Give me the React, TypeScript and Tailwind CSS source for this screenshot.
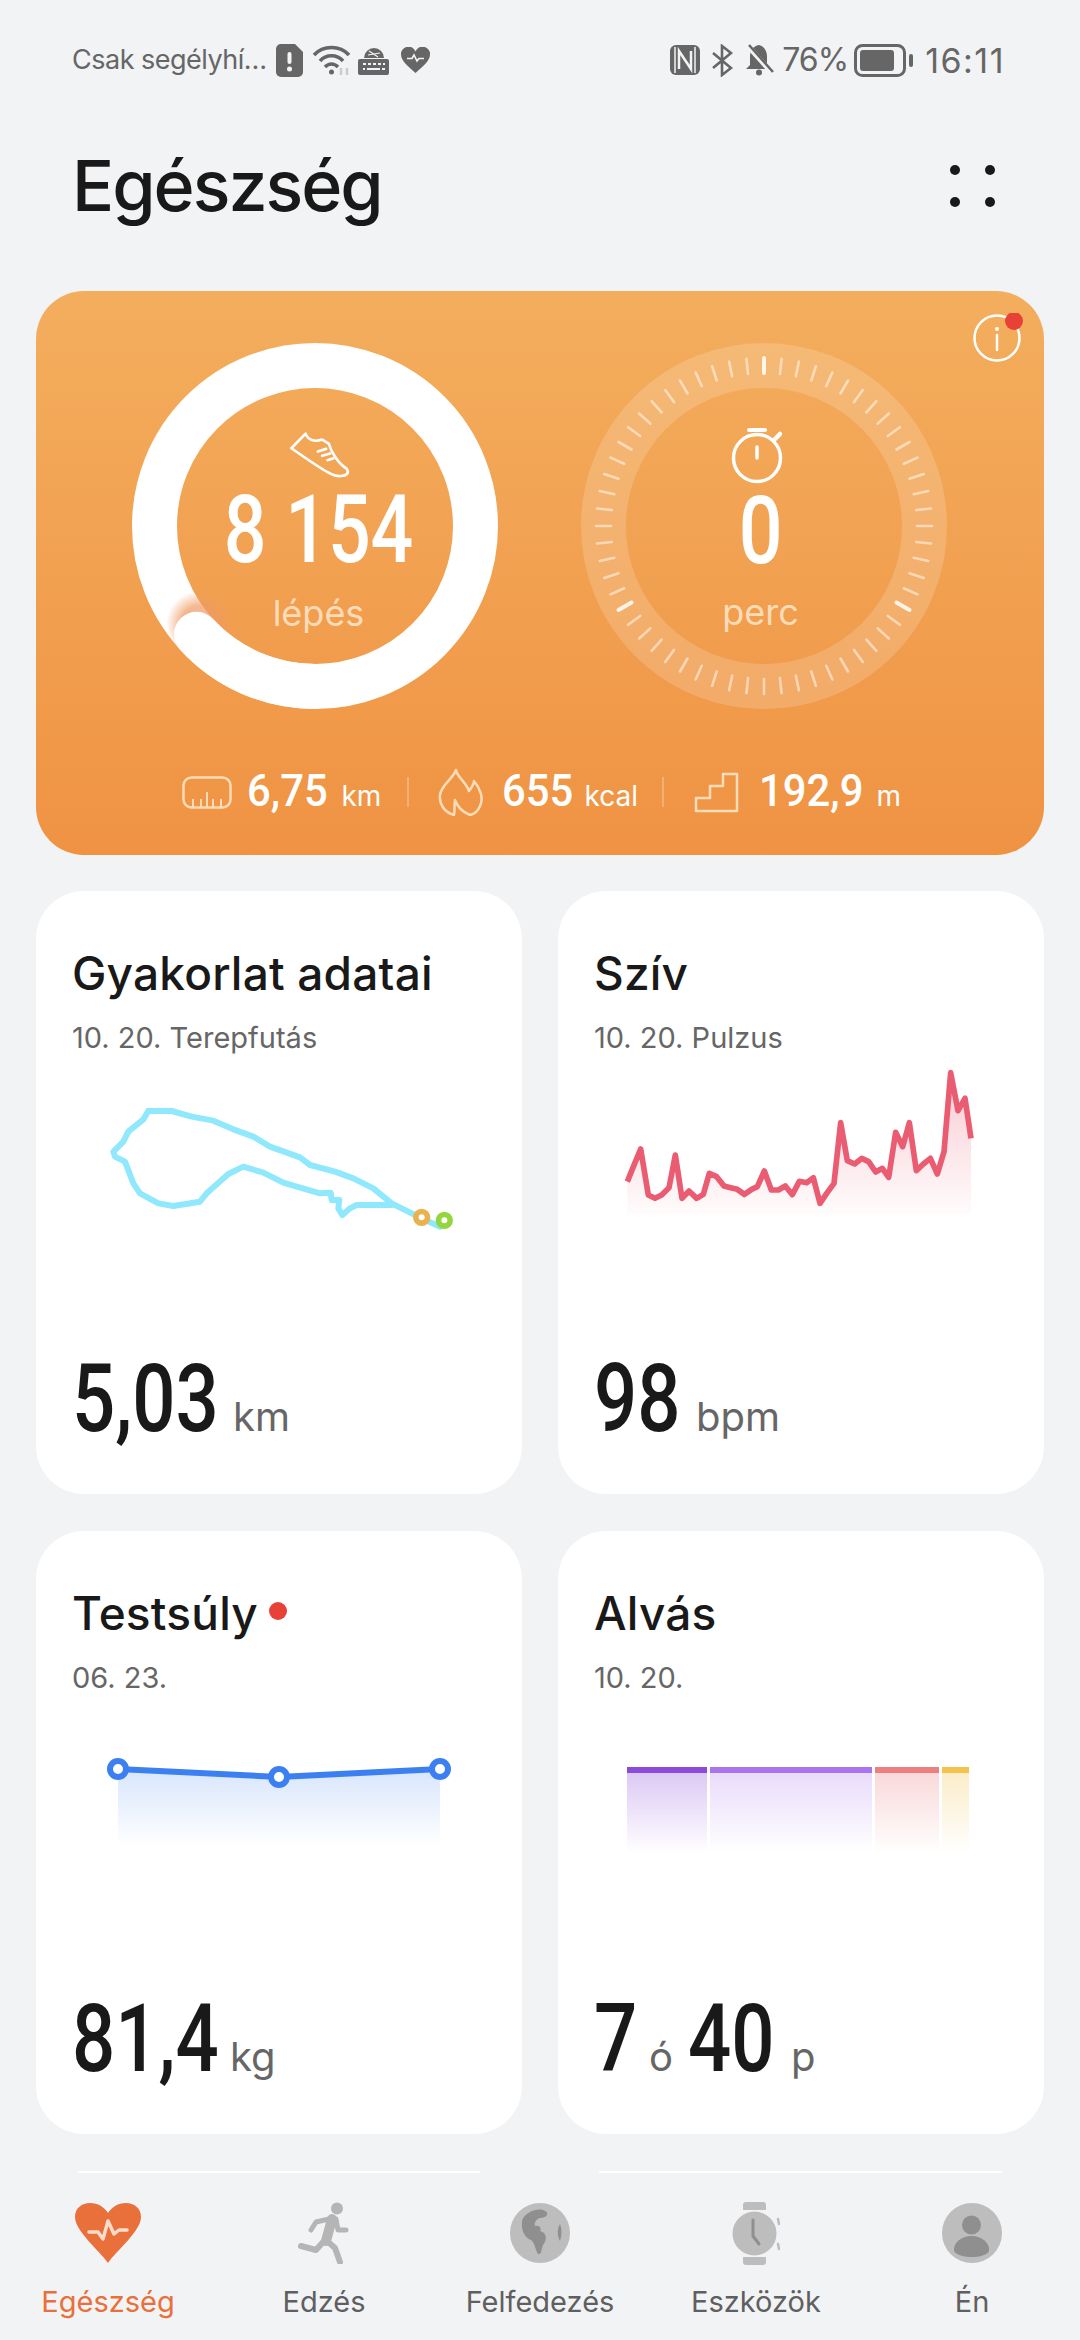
const DIGITS = "font-['Roboto',sans-serif] font-medium whitespace-nowrap";
const SANS = "font-['Inter','Noto_Sans',sans-serif]";

const routeA =
  "175,93 245,93 305,110 370,122 430,148 490,170 540,200 630,232 660,255 735,275 790,295 850,325 905,370 985,410 1050,440";
const routeB =
  "905,375 800,375 780,385 757,405 745,385 748,360 725,360 722,338 690,340 620,320 580,308 520,278 460,260 415,282 350,340 330,365 250,378 205,370 150,340 130,310 105,245 75,230 70,215 100,185 115,155 160,118 175,93";
const pulse =
  "52,395 68,355 92,297 115,435 135,445 155,435 177,413 196,315 216,445 237,423 260,445 280,433 298,370 320,380 342,408 362,413 382,418 403,433 425,418 442,410 463,363 484,420 505,420 526,408 547,434 568,394 590,398 610,383 630,460 650,430 672,400 692,218 712,332 734,342 755,325 776,335 797,366 817,355 836,382 857,247 878,290 898,218 919,362 940,342 961,325 982,372 1002,305 1022,68 1044,182 1065,145 1083,265";

const sleepBars = [
  { w: "w-[80px]", top: "bg-[#8d4bdc]", fill: "from-[#8d4bdc]/30" },
  { w: "w-[162px]", top: "bg-[#a974ee]", fill: "from-[#a974ee]/25" },
  { w: "w-[64px]", top: "bg-[#ec8080]", fill: "from-[#ec8080]/30" },
  { w: "w-[27px]", top: "bg-[#f3c34e]", fill: "from-[#f3c34e]/30" },
];

function StatusBar() {
  return (
    <div className={`h-[120px] flex items-center pl-[72px] pr-[75px] text-[#666666] ${SANS}`}>
      <span className="text-[27px] tracking-[-0.5px] w-[204px] whitespace-nowrap">Csak segélyhí…</span>
      <svg width="27" height="33" viewBox="0 0 27 33">
        <path d="M5 0H19L27 8V28a5 5 0 0 1-5 5H5a5 5 0 0 1-5-5V5a5 5 0 0 1 5-5Z" fill="#666666" />
        <rect x="11.5" y="8" width="4" height="12" rx="2" fill="#f2f3f5" />
        <circle cx="13.5" cy="25" r="2.5" fill="#f2f3f5" />
      </svg>
      <svg className="ml-[9px]" width="39" height="32" viewBox="0 0 39 32" fill="none" stroke="#666666" strokeWidth="3.5">
        <path d="M2 11C11 1 28 1 37 11" />
        <path d="M8 17C14 10 25 10 31 17" />
        <path d="M13 23C17 19 22 19 26 23" />
        <circle cx="19.5" cy="28" r="2.5" fill="#666666" stroke="none" />
        <path d="M29 24V31M35 24V31" stroke="#cccccc" strokeWidth="2.5" />
      </svg>
      <svg className="ml-[7px]" width="31" height="30" viewBox="0 0 31 30">
        <path d="M6 13a10 10 0 1 1 20 0Z" fill="#666666" />
        <path d="M11 6 20 12M10 10 22 8" stroke="#f2f3f5" strokeWidth="1.2" />
        <rect x="0" y="14" width="31" height="16" rx="2" fill="#666666" />
        <path d="M5 19h3M10 19h3M15 19h3M20 19h3M25 19h2M5 24h2M9 24h13M24 24h3" stroke="#f2f3f5" strokeWidth="2" />
      </svg>
      <svg className="ml-[12px]" width="29" height="26" viewBox="0 0 29 26">
        <path d="M14.5 26C8 20 0 14 0 7.500A7.500 7.500 0 0 1 14.500 4.500A7.500 7.500 0 0 1 29 7.500C29 14 21 20 14.500 26Z" fill="#666666" />
        <path d="M6 11.500H11L13 8L16 14L18 11.500H23" fill="none" stroke="#f2f3f5" strokeWidth="1.6" />
      </svg>
      <div className="flex-1" />
      <svg width="30" height="30" viewBox="0 0 30 30">
        <rect width="30" height="30" rx="6" fill="#666666" />
        <path d="M5 2V28M25 2V28" stroke="#f2f3f5" strokeWidth="1.5" />
        <path d="M9 24V6L21 24V6" fill="none" stroke="#f2f3f5" strokeWidth="2.5" />
      </svg>
      <svg className="ml-[11px]" width="22" height="33" viewBox="0 0 22 33" fill="none" stroke="#666666" strokeWidth="2.6">
        <path d="M2 9 20 24 11 31V2L20 9 2 24" />
      </svg>
      <svg className="ml-[11px]" width="31" height="32" viewBox="0 0 31 32">
        <path d="M15 1c-6 1-9 6-9 11v9l-4 4h25l-4-4v-9c0-5-3-10-8-11Z" fill="#666666" />
        <circle cx="15" cy="28.500" r="3" fill="#666666" />
        <path d="M3 1 29 30" stroke="#f2f3f5" strokeWidth="5" />
        <path d="M5 1 29 28" stroke="#666666" strokeWidth="2.500" />
      </svg>
      <span className="ml-[7px] text-[32px] tracking-[-1px]">76%</span>
      <svg className="ml-[6px]" width="59" height="33" viewBox="0 0 59 33">
        <rect x="1.500" y="1.500" width="49" height="30" rx="7" fill="none" stroke="#666666" strokeWidth="3" />
        <rect x="6" y="6" width="34" height="21" rx="3" fill="#666666" />
        <rect x="55" y="10" width="4" height="13" rx="2" fill="#666666" />
      </svg>
      <span className="ml-[12px] text-[34px] tracking-[1.5px]">16:11</span>
    </div>
  );
}

function StepsRing() {
  return (
    <svg className="absolute inset-0" width="366" height="366" viewBox="-183 -183 366 366" fill="none">
      <defs>
        <radialGradient id="capGlow">
          <stop offset="55%" stopColor="#ee9a63" stopOpacity="0.7" />
          <stop offset="100%" stopColor="#ee9a63" stopOpacity="0" />
        </radialGradient>
      </defs>
      <circle r="160.500" stroke="#ffffff" strokeWidth="45" />
      <circle cx="-116" cy="98" r="33" fill="url(#capGlow)" />
      <path d="M0 160.500A160.500 160.500 0 0 1 -118.500 108.300" stroke="#ffffff" strokeWidth="45" strokeLinecap="round" />
    </svg>
  );
}

function TimerRing() {
  return (
    <svg className="absolute inset-0" width="366" height="366" viewBox="-183 -183 366 366" fill="none">
      <circle r="160.500" stroke="#ffffff" strokeOpacity="0.17" strokeWidth="45" />
      {Array.from({ length: 60 }, (_, i) => (
        <line
          key={i}
          y1="-153"
          y2="-168"
          stroke="#ffffff"
          strokeOpacity={i % 20 === 0 ? 0.85 : 0.5}
          strokeWidth={i % 20 === 0 ? 4 : 2.600}
          strokeLinecap="round"
          transform={`rotate(${i * 6})`}
        />
      ))}
    </svg>
  );
}

function Hero() {
  return (
    <div className="relative mx-[36px] mt-[55px] h-[564px] rounded-[48px] bg-linear-to-b from-[#f3ae5d] to-[#ef9343] pt-[52px]">
      <svg className="absolute left-[936px] top-[22px]" width="52" height="52" viewBox="0 0 52 52" fill="none">
        <circle cx="25" cy="25" r="22.500" stroke="#ffffff" strokeWidth="2.500" />
        <circle cx="25" cy="16" r="2" fill="#ffffff" />
        <path d="M25 22V37" stroke="#ffffff" strokeWidth="2.500" strokeLinecap="round" />
        <circle cx="42" cy="8" r="9" fill="#e84238" />
      </svg>
      <div className="flex pl-[96px] gap-[83px]">
        <div className="relative w-[366px] h-[366px] flex flex-col items-center text-white">
          <StepsRing />
          <svg className="relative mt-[88px] ml-[8px]" width="63" height="49" viewBox="565 358 190 148" fill="none" stroke="#ffffff" strokeWidth="8" strokeLinejoin="round" strokeLinecap="round">
            <path d="M618 366C625 385 645 392 668 384L688 396C695 420 715 455 742 472C750 482 745 492 725 494C705 497 690 490 575 410Z" />
            <path d="M655 420 680 412M668 433 692 426M684 446 702 440" />
          </svg>
          <span className={`relative ml-[8px] mt-[5px] text-[94px] leading-[90px] scale-x-[0.8] ${DIGITS}`}>8 154</span>
          <span className={`relative ml-[7px] mt-[15px] text-[36px] leading-[46px] text-[#fcdcb8] ${SANS}`}>lépés</span>
        </div>
        <div className="relative w-[366px] h-[366px] flex flex-col items-center text-white">
          <TimerRing />
          <svg className="relative mt-[84px] ml-[-7px]" width="60" height="58" viewBox="0 0 60 58" fill="none" stroke="#ffffff" strokeLinecap="round">
            <circle cx="26" cy="31" r="23.500" strokeWidth="3.500" />
            <path d="M26 20V31" strokeWidth="3.500" />
            <path d="M18 3H34" strokeWidth="4" />
            <path d="M43 13 49 7" strokeWidth="4.500" />
          </svg>
          <span className={`relative ml-[-7px] mt-[1px] text-[94px] leading-[90px] scale-x-[0.82] ${DIGITS}`}>0</span>
          <span className={`relative ml-[-7px] mt-[13px] text-[36px] leading-[46px] text-[#fcdcb8] ${SANS}`}>perc</span>
        </div>
      </div>
      <div className="mt-[58px] flex items-center justify-center text-white">
        <svg width="50" height="33" viewBox="0 0 50 33" fill="none" stroke="#fbdcb8" strokeWidth="2.500">
          <rect x="1.500" y="1.500" width="47" height="30" rx="8" />
          <path d="M11 31V23M19 31V23M25 31V16M31 31V23M39 31V23" strokeWidth="2" />
        </svg>
        <Stat value="6,75" unit="km" box="ml-[15px] w-[80px]" unitBox="w-[37px]" />
        <div className="ml-[28px] mr-[29px] w-[2px] h-[30px] bg-white/25" />
        <svg width="45" height="48" viewBox="0 0 45 48" fill="none" stroke="#fbdcb8" strokeWidth="2.500" strokeLinejoin="round">
          <path d="M18 2C19 9 28 14 31 23C34 19 36 16 36 13C42 20 46 30 42 38C40 43 36 46 32 47C24 44 20 40 17 32C16 38 17 43 16 47C6 44 1 36 2 27C3 17 15 11 18 2Z" />
        </svg>
        <Stat value="655" unit="kcal" box="ml-[19px] w-[68px]" unitBox="w-[52px]" />
        <div className="ml-[25px] mr-[30px] w-[2px] h-[30px] bg-white/25" />
        <svg width="45" height="41" viewBox="0 0 45 41" fill="none" stroke="#fbdcb8" strokeWidth="2.500" strokeLinejoin="round">
          <path d="M2 39V26H16V14H29V2H43V39Z" />
        </svg>
        <Stat value="192,9" unit="m" box="ml-[20px] w-[103px]" unitBox="w-[22px]" />
      </div>
    </div>
  );
}

function Stat({ value, unit, box, unitBox }: { value: string; unit: string; box: string; unitBox: string }) {
  return (
    <div className="flex items-baseline">
      <span className={`${box} text-[45px] leading-[48px] origin-left scale-x-[0.93] ${DIGITS}`}>{value}</span>
      <span className={`${unitBox} ml-[15px] text-[28px] whitespace-nowrap ${SANS}`}>{unit}</span>
    </div>
  );
}

function Card({ title, sub, dot, children, value }: { title: string; sub: string; dot?: boolean; children: React.ReactNode; value: React.ReactNode }) {
  return (
    <div className={`h-[603px] rounded-[48px] bg-white pl-[36px] pt-[52px] pb-[45px] flex flex-col ${SANS}`}>
      <div className="flex items-center h-[60px]">
        <span className="text-[46px] font-medium tracking-[0.2px] text-[#191919]">{title}</span>
        {dot && <span className="ml-[11px] mb-[4px] w-[18px] h-[18px] rounded-full bg-[#e84238]" />}
      </div>
      <div className="mt-[15px] text-[29px] leading-[40px] text-[#666666]">{sub}</div>
      {children}
      <div className="mt-auto flex items-baseline h-[100px] leading-[100px]">{value}</div>
    </div>
  );
}

function Num({ w, children }: { w: string; children: React.ReactNode }) {
  return <span className={`${w} text-[94px] text-[#191919] origin-left scale-x-[0.81] ${DIGITS}`}>{children}</span>;
}

function Unit({ children, className = "ml-[16px]" }: { children: React.ReactNode; className?: string }) {
  return <span className={`text-[40px] text-[#666666] ${className}`}>{children}</span>;
}

function Cards() {
  return (
    <div className="mx-[36px] mt-[36px] grid grid-cols-2 gap-x-[36px] gap-y-[37px]">
      <Card title="Gyakorlat adatai" sub="10. 20. Terepfutás" value={<><Num w="w-[145px]">5,03</Num><Unit>km</Unit></>}>
        <svg className="mt-[22px] ml-[18px]" width="400" height="180" viewBox="0 0 1200 540" fill="none" strokeLinejoin="round" strokeLinecap="round">
          <polyline points={routeA} stroke="#8fe8fb" strokeWidth="18" />
          <polyline points={routeB} stroke="#8fe8fb" strokeWidth="18" />
          <circle cx="995" cy="412" r="17.500" fill="#ffffff" stroke="#eab24e" strokeWidth="17" />
          <circle cx="1063" cy="421" r="17.500" fill="#ffffff" stroke="#95d63f" strokeWidth="17" />
        </svg>
      </Card>
      <Card title="Szív" sub="10. 20. Pulzus" value={<><Num w="w-[86px]">98</Num><Unit>bpm</Unit></>}>
        <svg className="mt-[-8px] ml-[16px]" width="380" height="190" viewBox="0 0 1140 570" fill="none">
          <defs>
            <linearGradient id="pulseFill" x1="0" y1="68" x2="0" y2="495" gradientUnits="userSpaceOnUse">
              <stop offset="0%" stopColor="#ea5c72" stopOpacity="0.32" />
              <stop offset="100%" stopColor="#ea5c72" stopOpacity="0.02" />
            </linearGradient>
          </defs>
          <polygon points={`${pulse} 1083,495 52,495`} fill="url(#pulseFill)" />
          <polyline points={pulse} stroke="#ea5c72" strokeWidth="17" strokeLinejoin="round" />
        </svg>
      </Card>
      <Card title="Testsúly" sub="06. 23." dot value={<><Num w="w-[142px]">81,4</Num><Unit>kg</Unit></>}>
        <svg className="mt-[53px] ml-[28px]" width="360" height="100" viewBox="100 1750 360 100" fill="none">
          <defs>
            <linearGradient id="weightFill" x1="0" y1="0" x2="0" y2="1">
              <stop offset="0%" stopColor="#3b7ff0" stopOpacity="0.2" />
              <stop offset="100%" stopColor="#3b7ff0" stopOpacity="0" />
            </linearGradient>
          </defs>
          <polygon points="118,1768 279,1776 440,1768 440,1845 118,1845" fill="url(#weightFill)" />
          <polyline points="118,1768 279,1776 440,1768" stroke="#3b7ff0" strokeWidth="6" />
          <circle cx="118" cy="1768" r="8" fill="#ffffff" stroke="#3b7ff0" strokeWidth="6" />
          <circle cx="279" cy="1776" r="8" fill="#ffffff" stroke="#3b7ff0" strokeWidth="6" />
          <circle cx="440" cy="1768" r="8" fill="#ffffff" stroke="#3b7ff0" strokeWidth="6" />
        </svg>
      </Card>
      <Card
        title="Alvás"
        sub="10. 20."
        value={<><Num w="w-[43px]">7</Num><Unit className="ml-[12px]">ó</Unit><span className="ml-[15px] flex items-baseline"><Num w="w-[86px]">40</Num></span><Unit className="ml-[17px]">p</Unit></>}
      >
        <div className="mt-[69px] ml-[33px] flex gap-[3px] h-[86px]">
          {sleepBars.map((bar) => (
            <div key={bar.top} className={`${bar.w} flex flex-col`}>
              <div className={`h-[6px] ${bar.top}`} />
              <div className={`flex-1 bg-linear-to-b ${bar.fill} to-transparent`} />
            </div>
          ))}
        </div>
      </Card>
    </div>
  );
}

function HeartIcon() {
  return (
    <svg width="66" height="60" viewBox="0 0 66 60">
      <path d="M33 60C24 47 0 28 0 14C0 5 7 0 15 0C23 0 29 4 33 10C37 4 43 0 51 0C59 0 66 5 66 14C66 28 42 47 33 60Z" fill="#e9703a" />
      <path d="M14 29H23L28 36L33 18L39 31L44 27H52" fill="none" stroke="#fbdccb" strokeWidth="3.500" strokeLinejoin="round" strokeLinecap="round" />
    </svg>
  );
}

function RunnerIcon() {
  return (
    <svg width="52" height="62" viewBox="295 2201 52 62" fill="none" stroke="#b5b5b5" strokeLinecap="round" strokeLinejoin="round">
      <circle cx="334" cy="2207.500" r="6" fill="#b5b5b5" stroke="none" />
      <path d="M329 2218 323 2240" strokeWidth="10" />
      <path d="M326 2218 313 2221 308 2229" strokeWidth="5" />
      <path d="M333 2218 335 2229 343 2229" strokeWidth="5" />
      <path d="M321 2240 313 2249 298 2245" strokeWidth="6" />
      <path d="M324 2240 332 2247 337 2261" strokeWidth="6" />
    </svg>
  );
}

function GlobeIcon() {
  return (
    <svg width="60" height="60" viewBox="0 0 60 60">
      <circle cx="30" cy="30" r="30" fill="#bdbdbd" />
      <path d="M12 18C14 10 26 5 33 7C40 9 38 15 30 15C26 16 24 20 25 23C30 22 32 26 30 28C36 29 38 36 33 42C31 46 32 52 28 51C25 46 25 40 21 37C15 35 11 28 12 18Z" fill="#8f8f8f" />
      <path d="M50 21C52 26 52 32 50 38C47 33 47 26 50 21Z" fill="#8f8f8f" />
    </svg>
  );
}

function WatchIcon() {
  return (
    <svg width="48" height="63" viewBox="0 0 48 63">
      <path d="M11 8V3a3 3 0 0 1 3-3H31a3 3 0 0 1 3 3V8Z" fill="#bdbdbd" />
      <path d="M11 55V60a3 3 0 0 0 3 3H31a3 3 0 0 0 3-3V55Z" fill="#bdbdbd" />
      <circle cx="22.500" cy="31.500" r="22" fill="#bdbdbd" />
      <path d="M21 18V34L27 42" fill="none" stroke="#8f8f8f" strokeWidth="3" strokeLinecap="round" strokeLinejoin="round" />
      <path d="M46 17 47 22M46 42 47 47" stroke="#bdbdbd" strokeWidth="2.500" strokeLinecap="round" />
    </svg>
  );
}

function PersonIcon() {
  return (
    <svg width="60" height="60" viewBox="0 0 60 60">
      <circle cx="30" cy="30" r="30" fill="#bdbdbd" />
      <ellipse cx="29.500" cy="22" rx="9.500" ry="9.500" fill="#8f8f8f" />
      <path d="M12 48C11 40 19 33 29.500 33C40 33 48 40 47 48C43 56 17 56 12 48Z" fill="#8f8f8f" />
    </svg>
  );
}

const tabs = [
  { label: "Egészség", icon: <HeartIcon />, color: "text-[#e9703a]" },
  { label: "Edzés", icon: <RunnerIcon />, color: "text-[#5f5f5f]" },
  { label: "Felfedezés", icon: <GlobeIcon />, color: "text-[#5f5f5f]" },
  { label: "Eszközök", icon: <WatchIcon />, color: "text-[#5f5f5f]" },
  { label: "Én", icon: <PersonIcon />, color: "text-[#5f5f5f]" },
];

function BottomNav() {
  return (
    <div className={`mt-[37px] ${SANS}`}>
      <div className="flex px-[78px] justify-between">
        <div className="w-[402px] h-[2px] bg-white" />
        <div className="w-[403px] h-[2px] bg-white" />
      </div>
      <div className="grid grid-cols-5 mt-[28px]">
        {tabs.map((tab) => (
          <div key={tab.label} className="flex flex-col items-center">
            <div className="h-[64px] flex items-center justify-center">{tab.icon}</div>
            <span className={`mt-[17px] text-[29px] leading-[40px] ${tab.color}`}>{tab.label}</span>
          </div>
        ))}
      </div>
    </div>
  );
}

export default function App() {
  return (
    <div className="w-[1080px] h-[2340px] overflow-hidden bg-[#f2f3f5]">
      <StatusBar />
      <div className={`mt-[16px] h-[100px] pl-[72px] pr-[85px] flex items-center justify-between ${SANS}`}>
        <span className="text-[70px] font-medium tracking-[-2px] leading-[100px] text-[#191919]">Egészség</span>
        <div className="grid grid-cols-2 gap-x-[25px] gap-y-[22px]">
          <span className="w-[10px] h-[10px] rounded-full bg-[#191919]" />
          <span className="w-[10px] h-[10px] rounded-full bg-[#191919]" />
          <span className="w-[10px] h-[10px] rounded-full bg-[#191919]" />
          <span className="w-[10px] h-[10px] rounded-full bg-[#191919]" />
        </div>
      </div>
      <Hero />
      <Cards />
      <BottomNav />
    </div>
  );
}
